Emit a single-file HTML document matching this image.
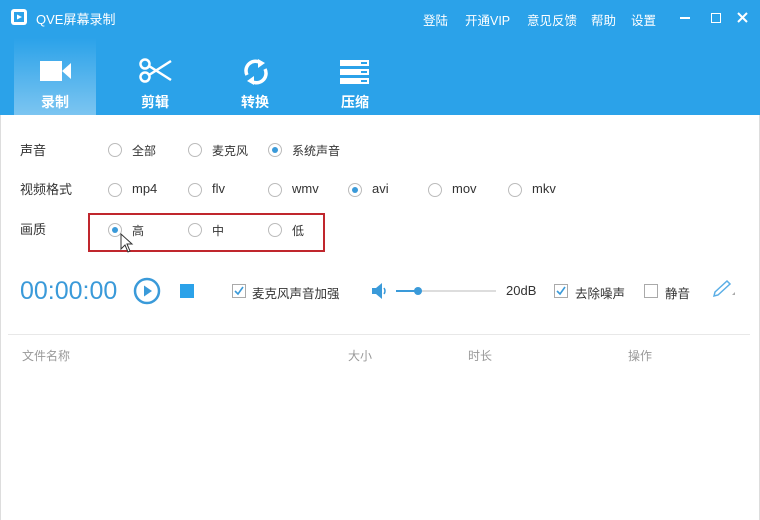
<!DOCTYPE html><html><head><meta charset="utf-8"><style>
body{margin:0;width:760px;height:520px;background:#fff;font-family:"Liberation Sans","Noto Sans CJK SC",sans-serif;position:relative;overflow:hidden;font-size:12px;color:#333}
.a{position:absolute;white-space:nowrap}
.hd{position:absolute;left:0;top:0;width:760px;height:115px;background:#2ba2e9}
.tab{position:absolute;top:38px;width:82px;height:77px;color:#fff;font-size:14px;font-weight:bold;text-align:center}
.r{position:absolute;width:12px;height:12px;border:1px solid #bbb;border-radius:50%;background:#fff}
.r.on::after{content:"";position:absolute;left:3px;top:3px;width:6px;height:6px;border-radius:50%;background:#3a9ad9}
.cb{position:absolute;width:12px;height:12px;border:1px solid #aaa;background:#fff}
.lbl{position:absolute;font-size:13px;color:#333;white-space:nowrap}
.th{position:absolute;top:347px;color:#999;font-size:12px}
</style></head><body>
<div class="hd"></div>
<div class="a" style="left:0;top:115px;width:1px;height:405px;background:#ddd"></div>
<div class="a" style="left:759px;top:115px;width:1px;height:405px;background:#ddd"></div>
<svg class="a" style="left:10px;top:8px" width="18" height="18"><rect x="1" y="1" width="16" height="16" rx="3" fill="#fff"/><rect x="4" y="4" width="10" height="10" fill="#2ba2e9"/><path d="M7 6.5L12 9L7 11.5Z" fill="#fff"/></svg>
<div class="a" style="left:36px;top:9px;color:#fff;font-size:13px">QVE屏幕录制</div>
<div class="a" style="left:423px;top:10px;color:#fff;font-size:12.5px;word-spacing:0">登陆</div>
<div class="a" style="left:465px;top:10px;color:#fff;font-size:12.5px">开通VIP</div>
<div class="a" style="left:527px;top:10px;color:#fff;font-size:12.5px">意见反馈</div>
<div class="a" style="left:591px;top:10px;color:#fff;font-size:12.5px">帮助</div>
<div class="a" style="left:631px;top:10px;color:#fff;font-size:12.5px">设置</div>
<div class="a" style="left:680px;top:17px;width:10px;height:2px;background:#fff"></div>
<div class="a" style="left:711px;top:13px;width:8px;height:8px;border:1.5px solid #fff"></div>
<svg class="a" style="left:737px;top:12px" width="11" height="11"><path d="M1 1L10 10M10 1L1 10" stroke="#fff" stroke-width="2"/></svg>
<div class="tab" style="left:14px;background:linear-gradient(#2ba2e9,#7cc5f1)"></div>
<svg class="a" style="left:40px;top:61px" width="32" height="22"><rect x="0" y="0" width="22" height="20" fill="#fff"/><path d="M22 10L31 2V18Z" fill="#fff"/></svg>
<svg class="a" style="left:139px;top:58px" width="34" height="26"><circle cx="6" cy="6" r="4.5" stroke="#fff" stroke-width="2.5" fill="none"/><circle cx="6" cy="19" r="4.5" stroke="#fff" stroke-width="2.5" fill="none"/><path d="M10 8L32 22M10 17L32 3" stroke="#fff" stroke-width="2.5"/></svg>
<svg class="a" style="left:242px;top:58px" width="28" height="28"><path d="M5 17A9.5 9.5 0 0 1 19 5" stroke="#fff" stroke-width="3.5" fill="none"/><path d="M16 1L23 5L16 10Z" fill="#fff"/><path d="M23 11A9.5 9.5 0 0 1 9 23" stroke="#fff" stroke-width="3.5" fill="none"/><path d="M12 27L5 23L12 18Z" fill="#fff"/></svg>
<svg class="a" style="left:340px;top:60px" width="30" height="24"><rect x="0" y="0" width="29" height="6" fill="#fff"/><rect x="0" y="9" width="29" height="6" fill="#fff"/><rect x="0" y="18" width="29" height="6" fill="#fff"/><rect x="21" y="2" width="6" height="2" fill="#2ba2e9"/><rect x="21" y="11" width="6" height="2" fill="#2ba2e9"/><rect x="21" y="20" width="6" height="2" fill="#2ba2e9"/></svg>
<div class="a" style="left:41px;top:92px;color:#fff;font-size:14px;font-weight:bold">录制</div>
<div class="a" style="left:141px;top:92px;color:#fff;font-size:14px;font-weight:bold">剪辑</div>
<div class="a" style="left:241px;top:92px;color:#fff;font-size:14px;font-weight:bold">转换</div>
<div class="a" style="left:341px;top:92px;color:#fff;font-size:14px;font-weight:bold">压缩</div>

<div class="lbl" style="left:20px;top:140px">声音</div>
<div class="lbl" style="left:20px;top:179px">视频格式</div>
<div class="lbl" style="left:20px;top:219px">画质</div>
<div class="r" style="left:108px;top:143px"></div><div class="lbl" style="left:132px;top:142px;font-size:12px">全部</div>
<div class="r" style="left:188px;top:143px"></div><div class="lbl" style="left:212px;top:142px;font-size:12px">麦克风</div>
<div class="r on" style="left:268px;top:143px"></div><div class="lbl" style="left:292px;top:142px;font-size:12px">系统声音</div>
<div class="r" style="left:108px;top:183px"></div><div class="lbl" style="left:132px;top:181px">mp4</div>
<div class="r" style="left:188px;top:183px"></div><div class="lbl" style="left:212px;top:181px">flv</div>
<div class="r" style="left:268px;top:183px"></div><div class="lbl" style="left:292px;top:181px">wmv</div>
<div class="r on" style="left:348px;top:183px"></div><div class="lbl" style="left:372px;top:181px">avi</div>
<div class="r" style="left:428px;top:183px"></div><div class="lbl" style="left:452px;top:181px">mov</div>
<div class="r" style="left:508px;top:183px"></div><div class="lbl" style="left:532px;top:181px">mkv</div>
<div class="r on" style="left:108px;top:223px"></div><div class="lbl" style="left:132px;top:222px;font-size:12px">高</div>
<div class="r" style="left:188px;top:223px"></div><div class="lbl" style="left:212px;top:222px;font-size:12px">中</div>
<div class="r" style="left:268px;top:223px"></div><div class="lbl" style="left:292px;top:222px;font-size:12px">低</div>
<div class="a" style="left:88px;top:213px;width:233px;height:35px;border:2px solid #c0262d"></div>
<svg class="a" style="left:120px;top:233px" width="14" height="20"><path d="M1 1V16L5 12L8 19L10 18L7 11H12Z" fill="#fff" stroke="#333" stroke-width="1"/></svg>

<div class="a" style="left:20px;top:277px;font-size:25px;color:#3a9ad9">00:00:00</div>
<svg class="a" style="left:133px;top:277px" width="28" height="28"><circle cx="14" cy="14" r="12" stroke="#3a9ad9" stroke-width="2.5" fill="none"/><path d="M11 8.5L19 14L11 19.5Z" fill="#3a9ad9"/></svg>
<div class="a" style="left:180px;top:284px;width:14px;height:14px;background:#2ba2e9"></div>
<div class="cb" style="left:232px;top:284px"></div><svg class="a" style="left:234px;top:286px" width="10" height="10"><path d="M1 5L4 8L9 1" stroke="#3a9ad9" stroke-width="1.6" fill="none"/></svg>
<div class="lbl" style="left:252px;top:283px;font-size:12.5px">麦克风声音加强</div>
<svg class="a" style="left:371px;top:282px" width="18" height="18"><path d="M1 6H5L11 1V17L5 12H1Z" fill="#3a9ad9"/><path d="M13 6Q15 9 13 12" stroke="#3a9ad9" stroke-width="1.5" fill="none"/></svg>
<div class="a" style="left:396px;top:290px;width:100px;height:2px;background:#ddd"></div>
<div class="a" style="left:396px;top:290px;width:22px;height:2px;background:#3a9ad9"></div>
<div class="a" style="left:414px;top:287px;width:8px;height:8px;border-radius:50%;background:#3a9ad9"></div>
<div class="lbl" style="left:506px;top:283px">20dB</div>
<div class="cb" style="left:554px;top:284px"></div><svg class="a" style="left:556px;top:286px" width="10" height="10"><path d="M1 5L4 8L9 1" stroke="#3a9ad9" stroke-width="1.6" fill="none"/></svg>
<div class="lbl" style="left:575px;top:283px;font-size:12.5px">去除噪声</div>
<div class="cb" style="left:644px;top:284px"></div>
<div class="lbl" style="left:665px;top:283px;font-size:12.5px">静音</div>
<svg class="a" style="left:711px;top:279px" width="26" height="20"><path d="M3 17L4 13L16 2L19 5L7 16Z" fill="none" stroke="#5aaee6" stroke-width="1.5"/><path d="M21 16L24 16L24 13Z" fill="#aaa"/></svg>
<div class="a" style="left:8px;top:334px;width:742px;height:1px;background:#e8e8e8"></div>
<div class="th" style="left:22px">文件名称</div>
<div class="th" style="left:348px">大小</div>
<div class="th" style="left:468px">时长</div>
<div class="th" style="left:628px">操作</div>
</body></html>
